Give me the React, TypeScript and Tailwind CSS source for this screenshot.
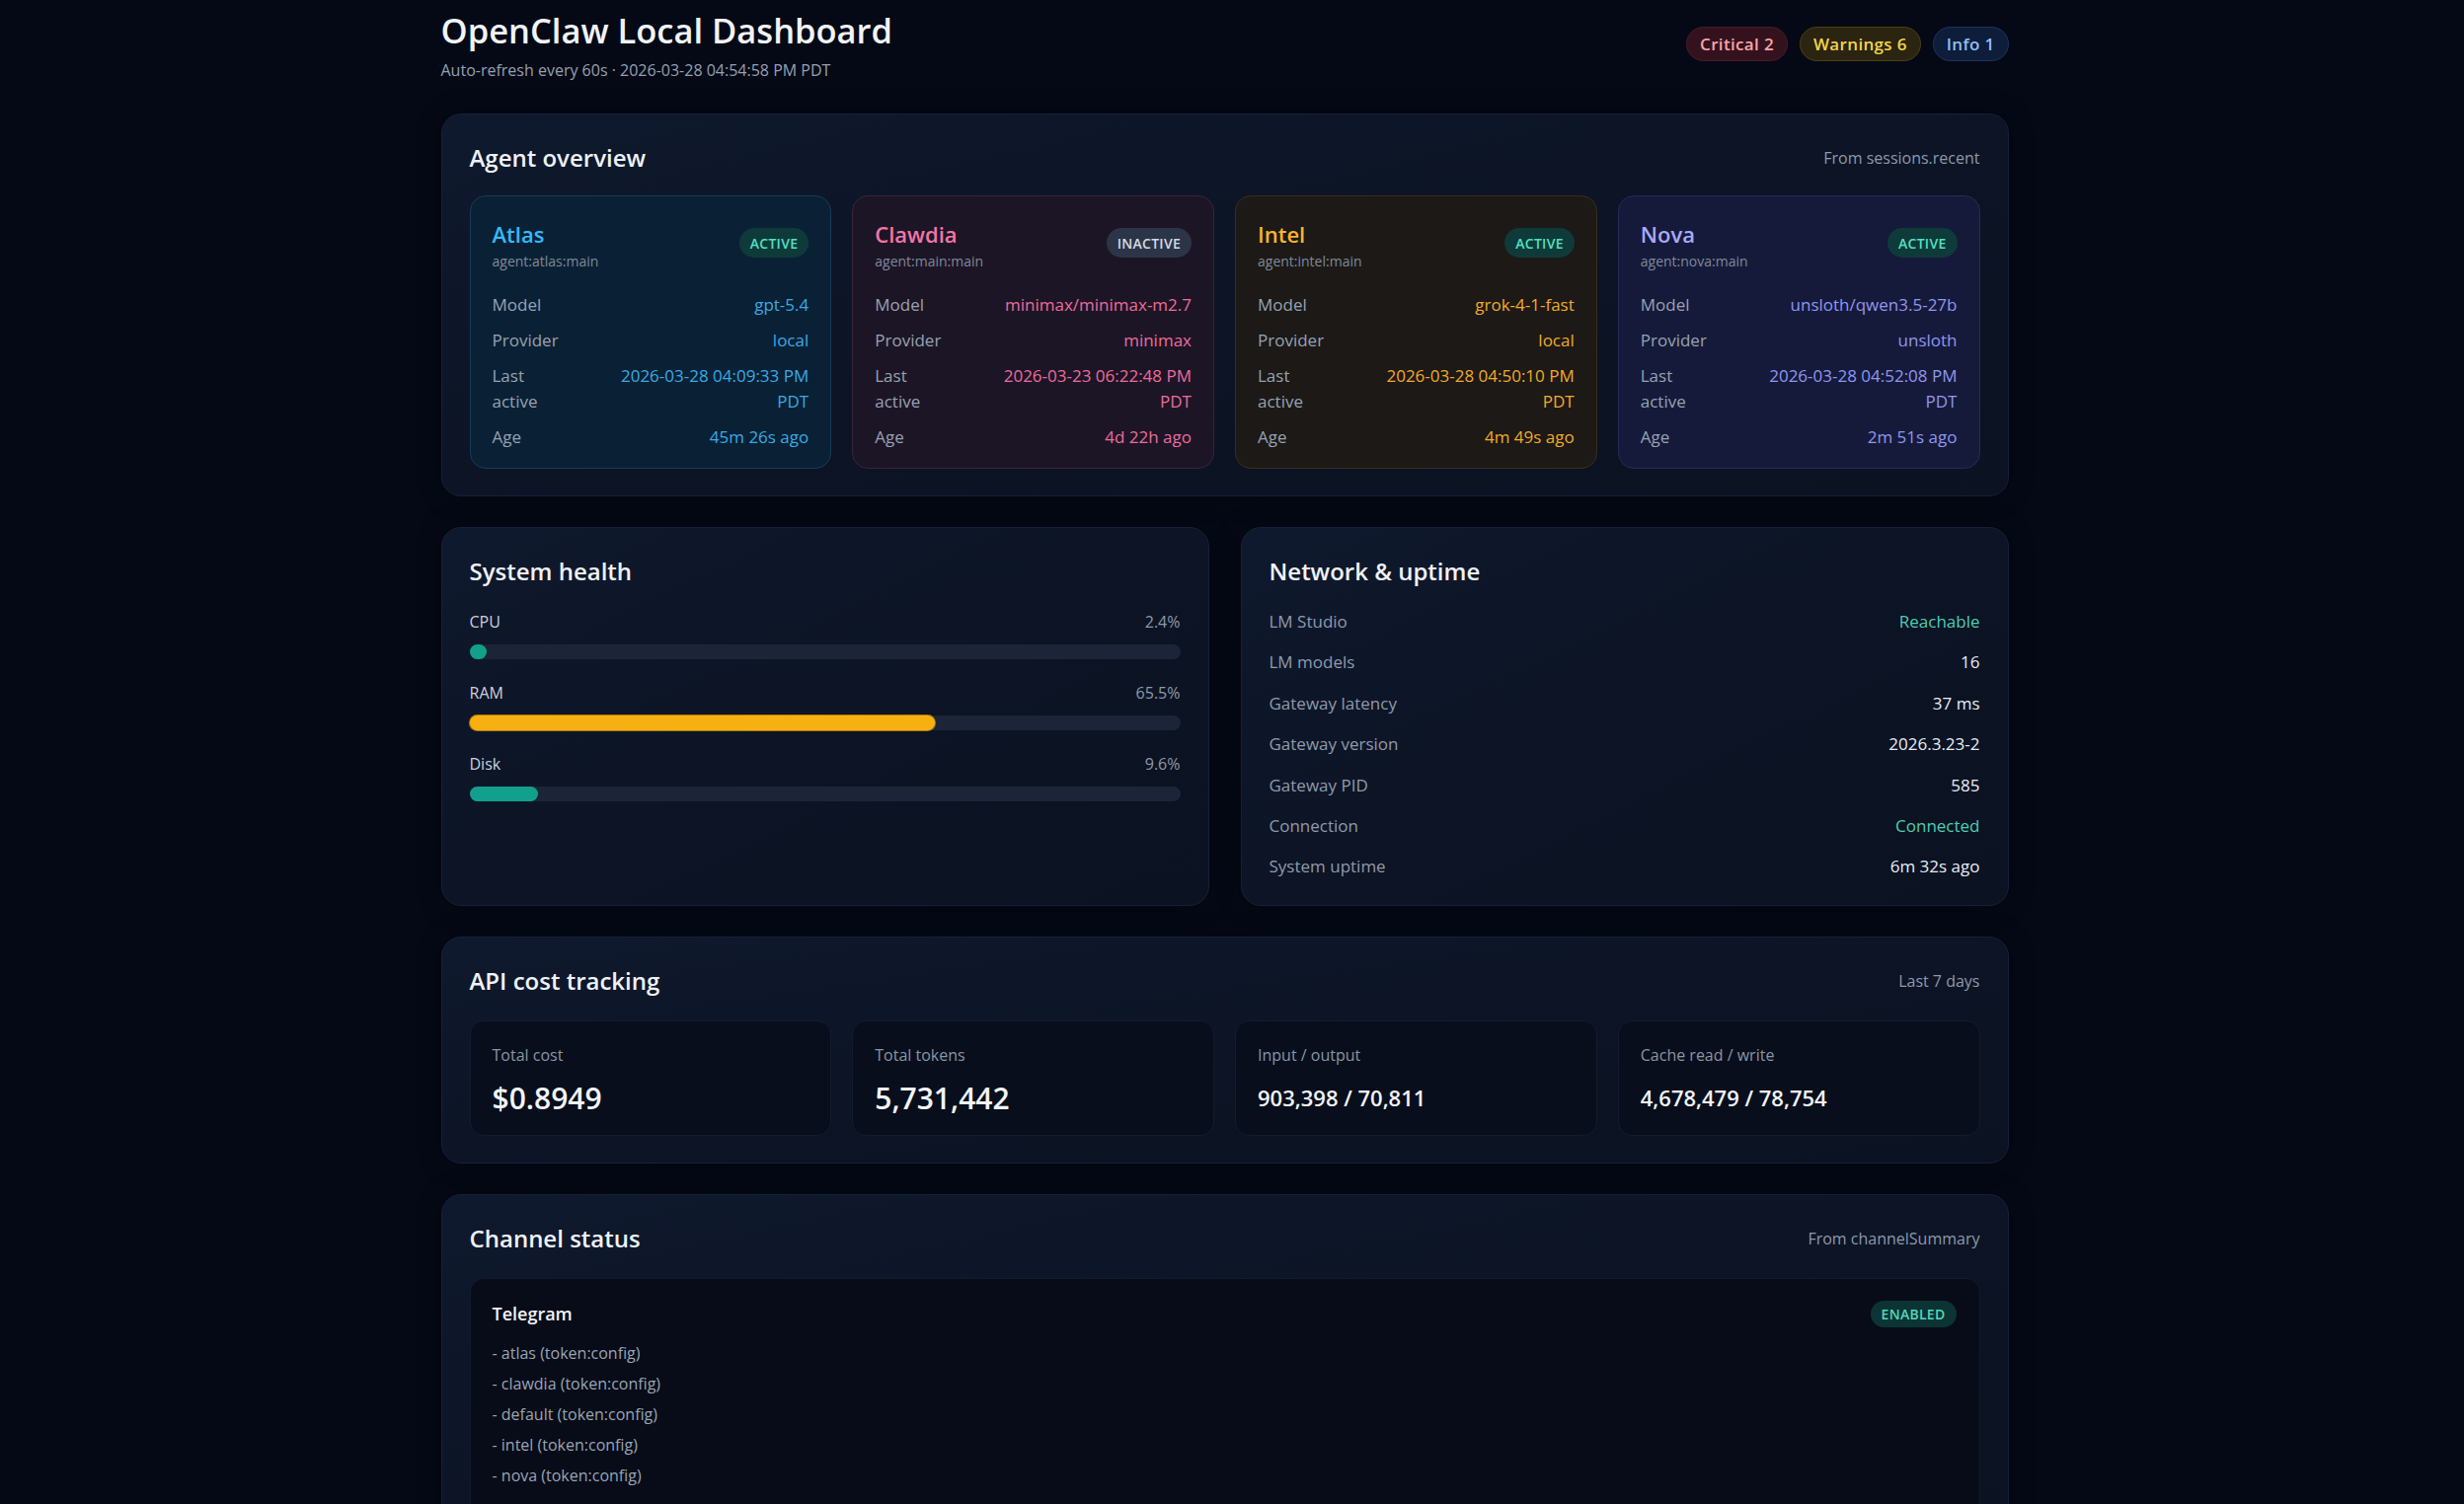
import type { ReactNode } from 'react';

type Agent = {
  name: string;
  id: string;
  active: boolean;
  model: string;
  provider: string;
  last: string;
  age: string;
  card: string;
  title: string;
  value: string;
};

const agents: Agent[] = [
  {
    name: 'Atlas',
    id: 'agent:atlas:main',
    active: true,
    model: 'gpt-5.4',
    provider: 'local',
    last: '2026-03-28 04:09:33 PM',
    age: '45m 26s ago',
    card: 'bg-[#0a2135] border-[#193b57]',
    title: 'text-[#38b8f6]',
    value: 'text-[#3aa9e4]',
  },
  {
    name: 'Clawdia',
    id: 'agent:main:main',
    active: false,
    model: 'minimax/minimax-m2.7',
    provider: 'minimax',
    last: '2026-03-23 06:22:48 PM',
    age: '4d 22h ago',
    card: 'bg-[#1c1526] border-[#382438]',
    title: 'text-[#f475a5]',
    value: 'text-[#ec6c9c]',
  },
  {
    name: 'Intel',
    id: 'agent:intel:main',
    active: true,
    model: 'grok-4-1-fast',
    provider: 'local',
    last: '2026-03-28 04:50:10 PM',
    age: '4m 49s ago',
    card: 'bg-[#1c1916] border-[#392d1d]',
    title: 'text-[#f8b42c]',
    value: 'text-[#f1aa2a]',
  },
  {
    name: 'Nova',
    id: 'agent:nova:main',
    active: true,
    model: 'unsloth/qwen3.5-27b',
    provider: 'unsloth',
    last: '2026-03-28 04:52:08 PM',
    age: '2m 51s ago',
    card: 'bg-[#151a3a] border-[#252b58]',
    title: 'text-[#a9a9f8]',
    value: 'text-[#9196f0]',
  },
];

const metrics = [
  { label: 'CPU', pct: 2.4, fill: 'bg-[#12a08d]' },
  { label: 'RAM', pct: 65.5, fill: 'bg-[#f7b012] ring-1 ring-[#b57a06]' },
  { label: 'Disk', pct: 9.6, fill: 'bg-[#12a08d]' },
];

const network = [
  { label: 'LM Studio', value: 'Reachable', ok: true },
  { label: 'LM models', value: '16' },
  { label: 'Gateway latency', value: '37 ms' },
  { label: 'Gateway version', value: '2026.3.23-2' },
  { label: 'Gateway PID', value: '585' },
  { label: 'Connection', value: 'Connected', ok: true },
  { label: 'System uptime', value: '6m 32s ago' },
];

const costs = [
  { label: 'Total cost', value: '$0.8949', big: true },
  { label: 'Total tokens', value: '5,731,442', big: true },
  { label: 'Input / output', value: '903,398 / 70,811' },
  { label: 'Cache read / write', value: '4,678,479 / 78,754' },
];

const telegramAccounts = ['atlas', 'clawdia', 'default', 'intel', 'nova'];

const Panel = ({ title, note, children, gap = 'mb-[23px]' }: { title: string; note?: string; children: ReactNode; gap?: string }) => (
  <section className="rounded-[20px] border border-[#16203a] bg-gradient-to-br from-[#0f192d] via-[#0c1425] to-[#0b1221] px-[28px] pt-[28px] pb-[27px] shadow-[0_0_24px_rgba(0,0,0,0.35)]">
    <div className={`flex items-center justify-between ${gap}`}>
      <h2 className="text-[24px] leading-[32px] font-semibold text-[#eef2f7]">{title}</h2>
      {note && <span className="text-[16px] text-[#8e99ab]">{note}</span>}
    </div>
    {children}
  </section>
);

const Pill = ({ children, className }: { children: ReactNode; className: string }) => (
  <span className={`inline-flex items-center rounded-full font-semibold tracking-[0.02em] ${className}`}>{children}</span>
);

const AgentCard = ({ a }: { a: Agent }) => (
  <div className={`rounded-[16px] border px-[22px] pt-[24px] pb-[18px] ${a.card}`}>
    <div className="flex items-start justify-between">
      <div>
        <div className={`text-[22px] leading-[28px] font-semibold ${a.title}`}>{a.name}</div>
        <div className="mt-[4px] text-[14px] leading-[20px] text-[#7f899b]">{a.id}</div>
      </div>
      {a.active ? (
        <Pill className="mt-[8px] h-[30px] px-[11px] text-[14px] bg-[#0f3a3a] text-[#52e0c0]">ACTIVE</Pill>
      ) : (
        <Pill className="mt-[8px] h-[30px] px-[11px] text-[14px] bg-[#2c3547] text-[#d3dbe6]">INACTIVE</Pill>
      )}
    </div>
    <dl className="mt-[21px] grid grid-cols-[64px_1fr] gap-y-[10px] text-[17px] leading-[26px]">
      <dt className="text-[#97a2b3]">Model</dt>
      <dd className={`text-right ${a.value}`}>{a.model}</dd>
      <dt className="text-[#97a2b3]">Provider</dt>
      <dd className={`text-right ${a.value}`}>{a.provider}</dd>
      <dt className="text-[#97a2b3]">
        Last
        <br />
        active
      </dt>
      <dd className={`text-right ${a.value}`}>
        {a.last}
        <br />
        PDT
      </dd>
      <dt className="text-[#97a2b3]">Age</dt>
      <dd className={`text-right ${a.value}`}>{a.age}</dd>
    </dl>
  </div>
);

export default function App() {
  return (
    <div className="min-h-screen bg-[#050915] pr-[15px] font-['Open_Sans','Noto_Sans',sans-serif] text-[#e5e9f0]">
      <div className="mx-auto w-[1588px] pt-[9px] pb-[40px]">
        {/* header */}
        <header className="flex items-start justify-between">
          <div>
            <h1 className="text-[34.5px] leading-[44px] font-semibold text-[#f1f4f8]">OpenClaw Local Dashboard</h1>
            <p className="mt-[6px] text-[16px] leading-[24px] text-[#95a0b1]">Auto-refresh every 60s · 2026-03-28 04:54:58 PM PDT</p>
          </div>
          <div className="mt-[18px] flex gap-[12px]">
            <Pill className="h-[35px] px-[13px] text-[17px] border border-[#4a1a27] bg-[#34121d] text-[#f6a5a9]">Critical 2</Pill>
            <Pill className="h-[35px] px-[13px] text-[17px] border border-[#4d4015] bg-[#2a2410] text-[#f3d34a]">Warnings 6</Pill>
            <Pill className="h-[35px] px-[13px] text-[17px] border border-[#1b3460] bg-[#0e1d3a] text-[#92bdf6]">Info 1</Pill>
          </div>
        </header>

        <main className="mt-[32px] flex flex-col gap-[31px]">
          <Panel title="Agent overview" note="From sessions.recent" gap="mb-[22px]">
            <div className="grid grid-cols-4 gap-[21px]">
              {agents.map((a) => (
                <AgentCard key={a.name} a={a} />
              ))}
            </div>
          </Panel>

          <div className="grid grid-cols-2 gap-[32px]">
            <Panel title="System health">
              <div className="flex flex-col gap-[22px]">
                {metrics.map((m) => (
                  <div key={m.label}>
                    <div className="flex justify-between text-[16px] leading-[24px]">
                      <span className="text-[#c9d1dc]">{m.label}</span>
                      <span className="text-[#8e99ab]">{m.pct}%</span>
                    </div>
                    <div className="mt-[11px] h-[15px] rounded-full bg-[#1b2537]">
                      <div className={`h-full min-w-[15px] rounded-full ${m.fill}`} style={{ width: `${m.pct}%` }} />
                    </div>
                  </div>
                ))}
              </div>
            </Panel>

            <Panel title="Network & uptime">
              <div className="flex flex-col gap-[17.4px] text-[17px] leading-[24px]">
                {network.map((r) => (
                  <div key={r.label} className="flex justify-between">
                    <span className="text-[#8f9aac]">{r.label}</span>
                    <span className={r.ok ? 'text-[#4fcdb0]' : 'text-[#e8ecf2]'}>{r.value}</span>
                  </div>
                ))}
              </div>
            </Panel>
          </div>

          <Panel title="API cost tracking" note="Last 7 days" gap="mb-[24px]">
            <div className="grid grid-cols-4 gap-[21px]">
              {costs.map((c) => (
                <div key={c.label} className="rounded-[14px] border border-[#131c2e] bg-[#080e1b] px-[22px] pt-[24px] pb-[20px]">
                  <div className="text-[16px] leading-[20px] text-[#8a95a7]">{c.label}</div>
                  <div
                    className={`mt-[15px] h-[36px] flex items-center font-semibold text-[#f1f4f8] ${
                      c.big ? 'text-[30px]' : 'text-[22px]'
                    }`}
                  >
                    {c.value}
                  </div>
                </div>
              ))}
            </div>
          </Panel>

          <Panel title="Channel status" note="From channelSummary" gap="mb-[24px]">
            <div className="rounded-[14px] border border-[#121b2d] bg-[#070c18] px-[22px] pt-[22px] pb-[24px]">
              <div className="flex items-start justify-between">
                <div className="text-[18px] leading-[26px] font-semibold text-[#f1f4f8]">Telegram</div>
                <Pill className="mr-[1px] h-[27px] px-[11px] text-[14px] bg-[#0d3434] text-[#52d8bb]">ENABLED</Pill>
              </div>
              <ul className="mt-[11px] text-[16px] leading-[31px] text-[#9aa4b4]">
                {telegramAccounts.map((acc) => (
                  <li key={acc}>- {acc} (token:config)</li>
                ))}
              </ul>
            </div>
          </Panel>
        </main>
      </div>
    </div>
  );
}
